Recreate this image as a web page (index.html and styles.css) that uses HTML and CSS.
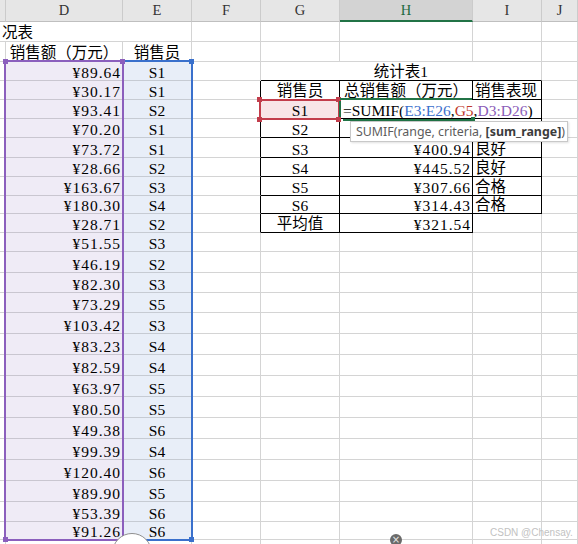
FILE: index.html
```html
<!DOCTYPE html>
<html lang="zh-CN">
<head>
<meta charset="utf-8">
<title>销售统计表</title>
<link rel="stylesheet" href="styles.css">
</head>
<body>
<div class="sheet">
  <div class="row hdr">
    <div class="hc"></div><div class="hc">D</div><div class="hc">E</div><div class="hc">F</div><div class="hc">G</div><div class="hc on">H</div><div class="hc">I</div><div class="hc">J</div>
  </div>

  <div class="row h20">
    <div class="c s3 cn">况表</div><div class="c"></div><div class="c"></div><div class="c"></div><div class="c"></div><div class="c"></div>
  </div>
  <div class="row h20">
    <div class="c"></div><div class="c m cn">销售额（万元）</div><div class="c m cn">销售员</div><div class="c"></div><div class="c"></div><div class="c"></div><div class="c"></div><div class="c"></div>
  </div>

  <div class="row h19">
    <div class="c"></div><div class="c d r">¥89.64</div><div class="c e m">S1</div><div class="c"></div><div class="c s3 tt m cn">统计表1</div><div class="c"></div>
  </div>
  <div class="row h19">
    <div class="c"></div><div class="c d r">¥30.17</div><div class="c e m">S1</div><div class="c tl"></div><div class="c tb m cn">销售员</div><div class="c tb m cn">总销售额（万元）</div><div class="c tb cn">销售表现</div><div class="c"></div>
  </div>
  <div class="row h19">
    <div class="c"></div><div class="c d r">¥93.41</div><div class="c e m">S2</div><div class="c tl"></div><div class="c tb m pk">S1</div><div class="c tb"></div><div class="c tb"></div><div class="c"></div>
  </div>
  <div class="row h19">
    <div class="c"></div><div class="c d r">¥70.20</div><div class="c e m">S1</div><div class="c tl"></div><div class="c tb m">S2</div><div class="c tb"></div><div class="c tb"></div><div class="c"></div>
  </div>
  <div class="row h20">
    <div class="c"></div><div class="c d r">¥73.72</div><div class="c e m">S1</div><div class="c tl"></div><div class="c tb m">S3</div><div class="c tb r">¥400.94</div><div class="c tb cn">良好</div><div class="c"></div>
  </div>
  <div class="row h19">
    <div class="c"></div><div class="c d r">¥28.66</div><div class="c e m">S2</div><div class="c tl"></div><div class="c tb m">S4</div><div class="c tb r">¥445.52</div><div class="c tb cn">良好</div><div class="c"></div>
  </div>
  <div class="row h19">
    <div class="c"></div><div class="c d r">¥163.67</div><div class="c e m">S3</div><div class="c tl"></div><div class="c tb m">S5</div><div class="c tb r">¥307.66</div><div class="c tb cn">合格</div><div class="c"></div>
  </div>
  <div class="row h18">
    <div class="c"></div><div class="c d r">¥180.30</div><div class="c e m">S4</div><div class="c tl"></div><div class="c tb m">S6</div><div class="c tb r">¥314.43</div><div class="c tb cn">合格</div><div class="c"></div>
  </div>
  <div class="row h19">
    <div class="c"></div><div class="c d r">¥28.71</div><div class="c e m">S2</div><div class="c tl"></div><div class="c tb m cn">平均值</div><div class="c tb r">¥321.54</div><div class="c"></div><div class="c"></div>
  </div>
  <div class="row h19">
    <div class="c"></div><div class="c d r">¥51.55</div><div class="c e m">S3</div><div class="c"></div><div class="c"></div><div class="c"></div><div class="c"></div><div class="c"></div>
  </div>
  <div class="row h21">
    <div class="c"></div><div class="c d r">¥46.19</div><div class="c e m">S2</div><div class="c"></div><div class="c"></div><div class="c"></div><div class="c"></div><div class="c"></div>
  </div>
  <div class="row h20">
    <div class="c"></div><div class="c d r">¥82.30</div><div class="c e m">S3</div><div class="c"></div><div class="c"></div><div class="c"></div><div class="c"></div><div class="c"></div>
  </div>
  <div class="row h20">
    <div class="c"></div><div class="c d r">¥73.29</div><div class="c e m">S5</div><div class="c"></div><div class="c"></div><div class="c"></div><div class="c"></div><div class="c"></div>
  </div>
  <div class="row h21">
    <div class="c"></div><div class="c d r">¥103.42</div><div class="c e m">S3</div><div class="c"></div><div class="c"></div><div class="c"></div><div class="c"></div><div class="c"></div>
  </div>
  <div class="row h21">
    <div class="c"></div><div class="c d r">¥83.23</div><div class="c e m">S4</div><div class="c"></div><div class="c"></div><div class="c"></div><div class="c"></div><div class="c"></div>
  </div>
  <div class="row h21">
    <div class="c"></div><div class="c d r">¥82.59</div><div class="c e m">S4</div><div class="c"></div><div class="c"></div><div class="c"></div><div class="c"></div><div class="c"></div>
  </div>
  <div class="row h21">
    <div class="c"></div><div class="c d r">¥63.97</div><div class="c e m">S5</div><div class="c"></div><div class="c"></div><div class="c"></div><div class="c"></div><div class="c"></div>
  </div>
  <div class="row h21">
    <div class="c"></div><div class="c d r">¥80.50</div><div class="c e m">S5</div><div class="c"></div><div class="c"></div><div class="c"></div><div class="c"></div><div class="c"></div>
  </div>
  <div class="row h21">
    <div class="c"></div><div class="c d r">¥49.38</div><div class="c e m">S6</div><div class="c"></div><div class="c"></div><div class="c"></div><div class="c"></div><div class="c"></div>
  </div>
  <div class="row h21">
    <div class="c"></div><div class="c d r">¥99.39</div><div class="c e m">S4</div><div class="c"></div><div class="c"></div><div class="c"></div><div class="c"></div><div class="c"></div>
  </div>
  <div class="row h21">
    <div class="c"></div><div class="c d r">¥120.40</div><div class="c e m">S6</div><div class="c"></div><div class="c"></div><div class="c"></div><div class="c"></div><div class="c"></div>
  </div>
  <div class="row h21">
    <div class="c"></div><div class="c d r">¥89.90</div><div class="c e m">S5</div><div class="c"></div><div class="c"></div><div class="c"></div><div class="c"></div><div class="c"></div>
  </div>
  <div class="row h20">
    <div class="c"></div><div class="c d r">¥53.39</div><div class="c e m">S6</div><div class="c"></div><div class="c"></div><div class="c"></div><div class="c"></div><div class="c"></div>
  </div>
  <div class="row h18">
    <div class="c"></div><div class="c d r">¥91.26</div><div class="c e m">S6</div><div class="c"></div><div class="c"></div><div class="c"></div><div class="c"></div><div class="c"></div>
  </div>
  <div class="row h20">
    <div class="c"></div><div class="c"></div><div class="c"></div><div class="c"></div><div class="c"></div><div class="c"></div><div class="c"></div><div class="c"></div>
  </div>

  <!-- overlays: range selections, active cell editor, tooltip -->
  <div class="rng rng-e"></div>
  <div class="rng rng-d"></div>
  <div class="hd hd-d hd-tl"></div>
  <div class="hd hd-d hd-tr"></div>
  <div class="hd hd-d hd-bl"></div>
  <div class="hd hd-e hd-etr"></div>
  <div class="hd hd-e hd-ebr"></div>

  <div class="rng rng-g"></div>
  <div class="hd hd-g hd-g1"></div>
  <div class="hd hd-g hd-g2"></div>
  <div class="hd hd-g hd-g3"></div>
  <div class="hd hd-g hd-g4"></div>

  <div class="editor">=SUMIF(<span class="fb">E3:E26</span>,<span class="fr">G5</span>,<span class="fp">D3:D26</span>)</div>
  <div class="gl gl-top"></div>
  <div class="gl gl-left"></div>
  <div class="gl gl-bot"></div>
  <div class="gl gl-hd"></div>

  <div class="tip">SUMIF(range, criteria, <b>[sum_range]</b>)</div>

  <div class="bubble"></div>
  <div class="close">×</div>
  <div class="mark">CSDN @Chensay.</div>
</div>
</body>
</html>
```

FILE: styles.css
```css
html, body {
  margin: 0;
  padding: 0;
  background: #ffffff;
  overflow: hidden;
}

.sheet {
  position: relative;
  width: 578px;
  height: 544px;
  overflow: hidden;
  font-family: "Liberation Serif", "Noto Sans CJK SC", serif;
  font-size: 15.5px;
  color: #000;
}

.row {
  display: grid;
  grid-template-columns: 6px 117px 69px 69px 79px 133px 69px 36px;
}

.h18 { height: 18px; }
.h19 { height: 19px; }
.h20 { height: 20px; }
.h21 { height: 21px; }

/* column header */
.hdr {
  height: 22px;
  background: #e6e6e6;
}
.hc {
  box-sizing: border-box;
  border-right: 1px solid #cbcbcb;
  border-bottom: 1px solid #bfbfbf;
  display: flex;
  align-items: center;
  justify-content: center;
  font-family: "Liberation Serif", serif;
  font-size: 14.5px;
  color: #333;
}
.hc.on {
  background: #d3d3d3;
  color: #1d6a40;
  border-bottom: 2px solid #217346;
}

/* cells */
.c {
  box-sizing: border-box;
  border-right: 1px solid #d4d4d4;
  border-bottom: 1px solid #d4d4d4;
  display: flex;
  align-items: flex-end;
  padding: 0 2px 0 2px;
  line-height: 15px;
  white-space: nowrap;
  overflow: hidden;
}
.s3 { grid-column: span 3; }
.r {
  justify-content: flex-end;
  letter-spacing: 1px;
  padding-right: 1px;
}
.m { justify-content: center; }
.cn { padding-bottom: 1px; }

.d { background: #efebf6; border-bottom-color: #c9c6d0; }
.e { background: #e8eef8; border-bottom-color: #c6cbd3; }
.pk { background: #f8e5e7; }

.tb {
  border-right-color: #000;
  border-bottom-color: #000;
}
.tl { border-right-color: #000; }
.tt { border-bottom-color: #000; }

/* range selection overlays */
.rng {
  position: absolute;
  box-sizing: border-box;
  border: 2px solid;
  pointer-events: none;
}
.rng-d {
  left: 4px; top: 60px; width: 120px; height: 481px;
  border-color: #8b5fbd;
}
.rng-e {
  left: 122px; top: 60px; width: 71px; height: 481px;
  border-color: #3a70cc;
}
.rng-g {
  left: 259px; top: 99px; width: 81px; height: 21px;
  border-color: #c23d4b;
}

.hd {
  position: absolute;
  width: 5px;
  height: 5px;
}
.hd-d { background: #8b5fbd; }
.hd-e { background: #3a70cc; }
.hd-g { background: #c23d4b; }
.hd-tl { left: 3px; top: 59px; }
.hd-tr { left: 120px; top: 59px; }
.hd-bl { left: 3px; top: 537px; }
.hd-etr { left: 189px; top: 59px; }
.hd-ebr { left: 189px; top: 537px; }
.hd-g1 { left: 257px; top: 97px; }
.hd-g2 { left: 336px; top: 97px; }
.hd-g3 { left: 257px; top: 117px; }
.hd-g4 { left: 336px; top: 117px; }

/* in-cell formula editor */
.editor {
  position: absolute;
  left: 341px; top: 100px; width: 198px; height: 18px;
  background: #fff;
  display: flex;
  align-items: flex-end;
  padding-left: 2px;
  box-sizing: border-box;
  line-height: 15px;
  white-space: nowrap;
}
.fb { color: #3a6fcc; }
.fr { color: #c0392b; }
.fp { color: #8b5cb8; }

.gl {
  position: absolute;
  background: #217346;
}
.gl-top { left: 340px; top: 98px; width: 132px; height: 2px; }
.gl-left { left: 339px; top: 101px; width: 2px; height: 16px; }
.gl-bot { left: 343px; top: 119px; width: 131px; height: 2px; }
.gl-hd { left: 471px; top: 117px; width: 4px; height: 4px; }

/* function tooltip */
.tip {
  position: absolute;
  left: 350px; top: 121px; width: 218px; height: 21px;
  box-sizing: border-box;
  border: 1px solid #c8c8c8;
  background: #fff;
  box-shadow: 1px 1px 2px rgba(0, 0, 0, 0.12);
  font-family: "Noto Sans", "Open Sans", sans-serif;
  font-size: 12.4px;
  line-height: 19px;
  color: #5c5c5c;
  padding-left: 5px;
  white-space: nowrap;
}
.tip b {
  color: #3c3c3c;
  font-weight: 700;
}

/* bottom ui bits */
.bubble {
  position: absolute;
  left: 112px; top: 533px; width: 40px; height: 40px;
  box-sizing: border-box;
  border-radius: 50%;
  border: 1px solid #8f8f8f;
  background: #fff;
}
.close {
  position: absolute;
  left: 390px; top: 534px; width: 12px; height: 12px;
  border-radius: 50%;
  background: #6a6a6a;
  color: #e6e6e6;
  font-family: "DejaVu Sans", sans-serif;
  font-size: 10px;
  line-height: 12px;
  text-align: center;
}
.mark {
  position: absolute;
  left: 490px; top: 527px;
  font-family: "Liberation Sans", sans-serif;
  font-size: 10px;
  color: #c2c2c2;
  white-space: nowrap;
}
```
